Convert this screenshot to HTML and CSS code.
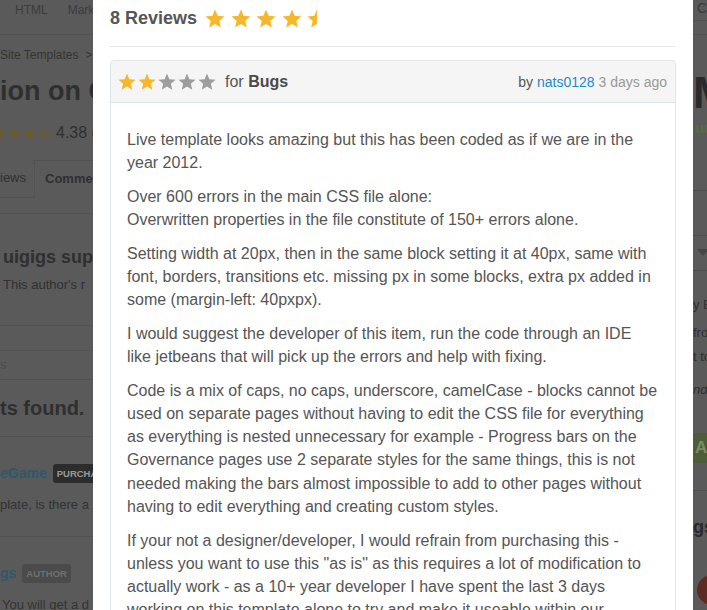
FILE: index.html
```html
<!DOCTYPE html>
<html lang="en">
<head>
<meta charset="utf-8">
<title>Reviews</title>
<link rel="stylesheet" href="styles.css">
</head>
<body>
<div class="page">
  <nav class="topnav">
    <div class="nav-left"><span class="nav-item">HTML</span><span class="nav-item">Mark</span></div>
    <div class="nav-right"><span class="nav-cart">Cart</span></div>
  </nav>
  <div class="layout">
    <main class="main">
      <div class="main-clip">
        <div class="crumbs">Site Templates &nbsp;&gt;</div>
        <h1 class="title">ion on C</h1>
        <div class="rating">
          <span class="mini-stars">
            <svg class="ms" viewBox="0 0 20 19"><path d="M10 0.5L12.65 6.86L19.51 7.41L14.28 11.89L15.88 18.59L10 15L4.12 18.59L5.72 11.89L0.49 7.41L7.35 6.86Z"/></svg>
            <svg class="ms" viewBox="0 0 20 19"><path d="M10 0.5L12.65 6.86L19.51 7.41L14.28 11.89L15.88 18.59L10 15L4.12 18.59L5.72 11.89L0.49 7.41L7.35 6.86Z"/></svg>
            <svg class="ms" viewBox="0 0 20 19"><path d="M10 0.5L12.65 6.86L19.51 7.41L14.28 11.89L15.88 18.59L10 15L4.12 18.59L5.72 11.89L0.49 7.41L7.35 6.86Z"/></svg>
            <svg class="ms" viewBox="0 0 20 19"><path d="M10 0.5L12.65 6.86L19.51 7.41L14.28 11.89L15.88 18.59L10 15L4.12 18.59L5.72 11.89L0.49 7.41L7.35 6.86Z"/></svg>
            <svg class="ms" viewBox="0 0 20 19"><path d="M10 0.5L10 15L4.12 18.59L5.72 11.89L0.49 7.41L7.35 6.86Z"/><path class="outline" d="M10 0.5L12.65 6.86L19.51 7.41L14.28 11.89L15.88 18.59L10 15"/></svg>
          </span>
          <span class="score">4.38 (</span>
        </div>
        <div class="tabs">
          <span class="tab">iews</span>
          <span class="tab tab-active">Comme</span>
        </div>
        <h2 class="support">uigigs sup</h2>
        <p class="support-note">This author's r</p>
        <div class="search"><span class="search-ph">s</span></div>
        <h2 class="found">ts found.</h2>
        <div class="comment">
          <div class="c-head"><span class="c-name">eGame</span><span class="badge badge-dark">PURCHA</span></div>
          <p class="c-text">plate, is there a</p>
        </div>
        <div class="comment">
          <div class="c-head"><span class="c-name">gs</span><span class="badge badge-light">AUTHOR</span></div>
          <p class="c-text c-text-last">You will get a d</p>
        </div>
      </div>
    </main>
    <aside class="side">
      <div class="price">M</div>
      <div class="price-note">ur</div>
      <div class="side-rule side-rule-1"></div>
      <div class="side-rule side-rule-2"></div>
      <div class="select"><span class="caret"></span></div>
      <div class="side-rule side-rule-3"></div>
      <div class="side-line side-line-1">y E</div>
      <div class="side-line side-line-2">fro</div>
      <div class="side-line side-line-3">t to</div>
      <div class="side-line side-italic">nd</div>
      <div class="buy">Ac</div>
      <div class="side-rule side-rule-4"></div>
      <div class="side-title">gs</div>
      <div class="side-avatar"></div>
    </aside>
  </div>
</div>

<div class="modal">
  <div class="modal-header">
    <h3 class="modal-title">8 Reviews</h3>
    <span class="stars stars-lg">
      <svg class="star" viewBox="0 0 20 19"><path d="M10 0.5L12.65 6.86L19.51 7.41L14.28 11.89L15.88 18.59L10 15L4.12 18.59L5.72 11.89L0.49 7.41L7.35 6.86Z"/></svg>
      <svg class="star" viewBox="0 0 20 19"><path d="M10 0.5L12.65 6.86L19.51 7.41L14.28 11.89L15.88 18.59L10 15L4.12 18.59L5.72 11.89L0.49 7.41L7.35 6.86Z"/></svg>
      <svg class="star" viewBox="0 0 20 19"><path d="M10 0.5L12.65 6.86L19.51 7.41L14.28 11.89L15.88 18.59L10 15L4.12 18.59L5.72 11.89L0.49 7.41L7.35 6.86Z"/></svg>
      <svg class="star" viewBox="0 0 20 19"><path d="M10 0.5L12.65 6.86L19.51 7.41L14.28 11.89L15.88 18.59L10 15L4.12 18.59L5.72 11.89L0.49 7.41L7.35 6.86Z"/></svg>
      <svg class="star" viewBox="0 0 20 19"><path d="M10 0.5L10 15L4.12 18.59L5.72 11.89L0.49 7.41L7.35 6.86Z"/></svg>
    </span>
  </div>

  <article class="review">
    <header class="review-head">
      <span class="stars stars-sm">
        <svg class="star" viewBox="0 0 20 19"><path d="M10 0.5L12.65 6.86L19.51 7.41L14.28 11.89L15.88 18.59L10 15L4.12 18.59L5.72 11.89L0.49 7.41L7.35 6.86Z"/></svg>
        <svg class="star" viewBox="0 0 20 19"><path d="M10 0.5L12.65 6.86L19.51 7.41L14.28 11.89L15.88 18.59L10 15L4.12 18.59L5.72 11.89L0.49 7.41L7.35 6.86Z"/></svg>
        <svg class="star star-off" viewBox="0 0 20 19"><path d="M10 0.5L12.65 6.86L19.51 7.41L14.28 11.89L15.88 18.59L10 15L4.12 18.59L5.72 11.89L0.49 7.41L7.35 6.86Z"/></svg>
        <svg class="star star-off" viewBox="0 0 20 19"><path d="M10 0.5L12.65 6.86L19.51 7.41L14.28 11.89L15.88 18.59L10 15L4.12 18.59L5.72 11.89L0.49 7.41L7.35 6.86Z"/></svg>
        <svg class="star star-off" viewBox="0 0 20 19"><path d="M10 0.5L12.65 6.86L19.51 7.41L14.28 11.89L15.88 18.59L10 15L4.12 18.59L5.72 11.89L0.49 7.41L7.35 6.86Z"/></svg>
      </span>
      <span class="review-for">for <b>Bugs</b></span>
      <span class="review-meta">by <a class="author" href="#">nats0128</a> <span class="ago">3 days ago</span></span>
    </header>
    <div class="review-body">
      <p>Live template looks amazing but this has been coded as if we are in the year 2012.</p>
      <p>Over 600 errors in the main CSS file alone:<br>Overwritten properties in the file constitute of 150+ errors alone.</p>
      <p>Setting width at 20px, then in the same block setting it at 40px, same with font, borders, transitions etc. missing px in some blocks, extra px added in some (margin-left: 40pxpx).</p>
      <p>I would suggest the developer of this item, run the code through an IDE like jetbeans that will pick up the errors and help with fixing.</p>
      <p>Code is a mix of caps, no caps, underscore, camelCase - blocks cannot be used on separate pages without having to edit the CSS file for everything as everything is nested unnecessary for example - Progress bars on the Governance pages use 2 separate styles for the same things, this is not needed making the bars almost impossible to add to other pages without having to edit everything and creating custom styles.</p>
      <p>If your not a designer/developer, I would refrain from purchasing this - unless you want to use this "as is" as this requires a lot of modification to actually work - as a 10+ year developer I have spent the last 3 days working on this template alone to try and make it useable within our project.</p>
    </div>
  </article>
</div>
</body>
</html>
```

FILE: styles.css
```css
* { box-sizing: border-box; }

html, body {
  margin: 0;
  height: 100%;
}

body {
  background: #5a5a5a;
  font-family: "Liberation Sans", Arial, sans-serif;
  overflow: hidden;
}

/* ---------- dimmed page behind the modal ---------- */
.page {
  width: 707px;
  color: #2e2e2e;
}

.topnav {
  height: 35px;
  border-bottom: 1px solid #525252;
  display: flex;
  justify-content: space-between;
  align-items: flex-start;
}

.nav-left {
  display: flex;
  gap: 20px;
  width: 93px;
  overflow: hidden;
  padding-left: 15px;
  font-size: 12px;
  line-height: 20px;
  color: #3c3c3c;
  white-space: nowrap;
}

.nav-right {
  width: 14px;
  overflow: hidden;
}

.nav-cart {
  display: block;
  height: 21px;
  padding-left: 4px;
  font-size: 14px;
  line-height: 16px;
  color: #3c3c3c;
  border-bottom: 1px solid #525252;
  white-space: nowrap;
}

.layout {
  display: flex;
}

.main {
  flex: 0 0 693px;
}

.main-clip {
  width: 93px;
  overflow: hidden;
}

.crumbs {
  margin-top: 12px;
  font-size: 12px;
  line-height: 16px;
  color: #343434;
  white-space: nowrap;
}

.title {
  margin: 12px 0 0;
  font-size: 27px;
  line-height: 32px;
  font-weight: bold;
  color: #2f2f2f;
  white-space: nowrap;
}

.rating {
  margin-top: 16px;
  height: 20px;
  display: flex;
  align-items: center;
  white-space: nowrap;
}

.mini-stars {
  display: flex;
  gap: 2px;
  margin-left: -22px;
}

.ms {
  width: 13px;
  height: 12.5px;
  fill: #6b5a2c;
}

.ms .outline {
  fill: none;
  stroke: #6b5a2c;
  stroke-width: 1.5;
}

.score {
  margin-left: 5px;
  font-size: 16px;
  color: #2f2f2f;
}

.tabs {
  margin-top: 17px;
  height: 54px;
  border-bottom: 1px solid #525252;
  display: flex;
  align-items: flex-start;
}

.tab {
  flex: none;
  height: 38px;
  line-height: 36px;
  font-size: 13px;
  color: #303030;
  white-space: nowrap;
  border-bottom: 1px solid #525252;
  padding-right: 10px;
}

.tab:first-child {
  width: 34px;
}

.tab-active {
  border: 1px solid #525252;
  border-bottom-color: #5a5a5a;
  padding-left: 10px;
  font-weight: bold;
  width: 120px;
}

.support {
  margin: 32px 0 0 3px;
  font-size: 18px;
  line-height: 22px;
  font-weight: bold;
  color: #2f2f2f;
  white-space: nowrap;
}

.support-note {
  margin: 8px 0 0 3px;
  font-size: 13px;
  line-height: 18px;
  color: #303030;
  white-space: nowrap;
}

.search {
  margin-top: 31px;
  border-top: 1px solid #525252;
  padding-top: 24px;
}

.search-ph {
  display: block;
  height: 30px;
  border-top: 1px solid #525252;
  border-bottom: 1px solid #525252;
  font-size: 13px;
  line-height: 28px;
  color: #4a4a4a;
}

.found {
  margin: 16px 0 0;
  font-size: 20px;
  line-height: 24px;
  font-weight: bold;
  color: #2f2f2f;
  white-space: nowrap;
}

.comment {
  margin-top: 16px;
  border-top: 1px solid #525252;
  padding: 26px 0 22px;
}

.comment + .comment {
  margin-top: 0;
}

.c-head {
  display: flex;
  align-items: center;
  gap: 6px;
  height: 20px;
}

.c-name {
  font-size: 14px;
  font-weight: bold;
  color: #2c5a6c;
}

.badge {
  flex: none;
  font-size: 9.5px;
  font-weight: bold;
  line-height: 19px;
  padding: 0 4px;
  border-radius: 3px;
  white-space: nowrap;
}

.badge-dark {
  background: #2c2c2c;
  color: #9a9a9a;
}

.badge-light {
  background: #4b4b4b;
  color: #707070;
}

.c-text {
  margin: 13px 0 0;
  font-size: 13px;
  line-height: 18px;
  color: #333;
  white-space: nowrap;
}

.c-text-last {
  padding-left: 2px;
}

/* right column, mostly hidden */
.side {
  flex: 0 0 14px;
  overflow: hidden;
  white-space: nowrap;
}

.price {
  margin-top: 36px;
  font-size: 44px;
  line-height: 44px;
  font-weight: bold;
  color: #2a2a2a;
}

.price-note {
  margin-top: 4px;
  font-size: 15px;
  line-height: 18px;
  font-weight: bold;
  color: #5a6a3a;
  padding-left: 2px;
}

.side-rule {
  height: 1px;
  background: #505050;
}

.side-rule-1 { margin-top: 53px; }
.side-rule-2 { margin-top: 44px; }

.select {
  height: 34px;
  position: relative;
}

.caret {
  position: absolute;
  left: 4px;
  top: 13px;
  border-left: 6px solid transparent;
  border-right: 6px solid transparent;
  border-top: 7px solid #454545;
}

.side-rule-3 { margin-top: 0; }

.side-line {
  font-size: 13px;
  line-height: 18px;
  color: #303030;
}

.side-line-1 { margin-top: 25px; }
.side-line-2 { margin-top: 10px; }
.side-line-3 { margin-top: 6px; }

.side-italic { font-style: italic; margin-top: 15px; }

.buy {
  margin-top: 34px;
  height: 30px;
  background: #4e5c38;
  color: #7c8a62;
  font-size: 17px;
  font-weight: bold;
  line-height: 30px;
  padding-left: 2px;
}

.side-rule-4 { margin-top: 27px; }

.side-title {
  margin-top: 25px;
  font-size: 18px;
  line-height: 22px;
  font-weight: bold;
  color: #2a2a2a;
}

.side-avatar {
  margin: 37px 0 0 4px;
  width: 30px;
  height: 30px;
  border-radius: 50%;
  background: #5e2a24;
}

/* ---------- modal ---------- */
.modal {
  position: fixed;
  top: 0;
  left: 93px;
  width: 600px;
  height: 100%;
  background: #fff;
  padding: 0 17px;
  overflow: hidden;
  color: #555;
}

.modal-header {
  display: flex;
  align-items: center;
  gap: 8px;
  height: 47px;
  padding-bottom: 10px;
  border-bottom: 1px solid #e5e7e9;
}

.modal-title {
  margin: 0;
  font-size: 18px;
  font-weight: bold;
  color: #555;
}

.stars {
  display: flex;
}

.stars-lg { gap: 5.5px; }
.stars-lg .star { width: 20px; height: 19px; }

.stars-sm { gap: 2px; }
.stars-sm .star { width: 18px; height: 17px; }

.star { fill: #f6b82a; display: block; }
.star-off { fill: #9d9d9d; }

.review {
  margin-top: 13px;
  border: 1px solid #dfe4e9;
  border-radius: 4px;
}

.review-head {
  display: flex;
  align-items: center;
  height: 42px;
  padding: 0 8px 0 7px;
  background: #f5f5f5;
  border-bottom: 1px solid #dfe4e9;
  border-radius: 4px 4px 0 0;
}

.review-for {
  margin-left: 9px;
  font-size: 16px;
  color: #555;
}

.review-for b { color: #4a4a4a; }

.review-meta {
  margin-left: auto;
  font-size: 14px;
  color: #555;
}

.author {
  color: #1e8bc3;
  text-decoration: none;
}

.ago { color: #999; }

.review-body {
  padding: 25px 16px;
  font-size: 16px;
  line-height: 23.2px;
}

.review-body p {
  margin: 0 0 10.5px;
}
```
